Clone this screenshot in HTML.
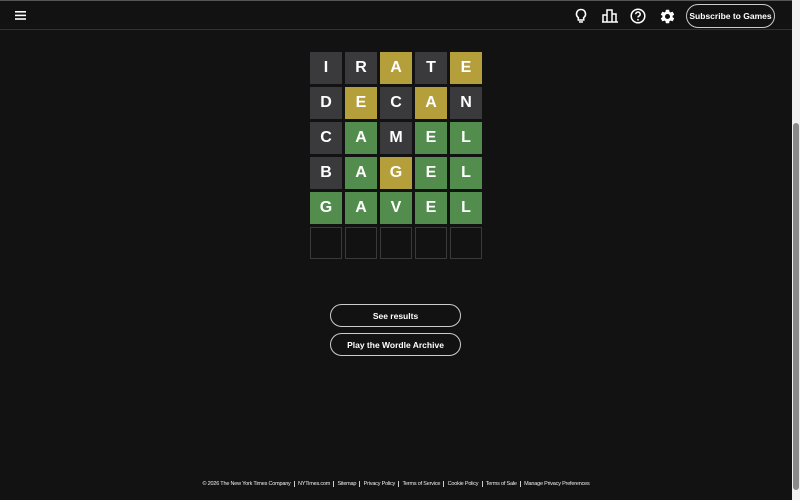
<!DOCTYPE html>
<html><head><meta charset="utf-8"><style>
*{margin:0;padding:0;box-sizing:border-box}
html,body{width:800px;height:500px;overflow:hidden;background:#121213;font-family:"Liberation Sans",Arial,sans-serif;color:#fff}
#main{position:absolute;left:0;top:0;width:792px;height:500px;background:#121213}
#hdr{position:absolute;left:0;top:0;width:792px;height:30px;border-top:1px solid #555;border-bottom:1px solid #333;background:#121213}
.sb{position:absolute;left:792px;top:0;width:8px;height:500px;background:#f1f1f1}
.thumb{position:absolute;left:793px;top:123px;width:6px;height:367px;background:#8a8a8a;border-radius:3px}
.tile{position:absolute;width:32px;height:32px;display:flex;align-items:center;justify-content:center;font-weight:bold;font-size:16px}
.x{background:#3a3a3c}.y{background:#b59f3b}.g{background:#538d4e}.e{border:1px solid #3a3a3c}
.btn{position:absolute;left:330px;width:131px;height:23px;border:1px solid #ccc;border-radius:12px;font-size:8.5px;font-weight:bold;display:flex;align-items:center;justify-content:center}
#sub{position:absolute;left:686px;top:3px;width:89px;height:24px;border:1px solid #ccc;border-radius:12px;font-size:8.5px;font-weight:bold;display:flex;align-items:center;justify-content:center}
#ft{position:absolute;top:481px;left:0;width:792px;text-align:center;font-size:5.5px;letter-spacing:-0.2px;color:#eee}
#ft span{padding:0 3.2px;border-left:1px solid #ccc}
#ft span:first-child{border:none}
</style></head><body>
<div id="main">
<div id="hdr">
<svg style="position:absolute;left:15px;top:10px" width="11" height="9"><rect y="0" width="11" height="1.6" fill="#fff"/><rect y="3.6" width="11" height="1.6" fill="#fff"/><rect y="7.2" width="11" height="1.6" fill="#fff"/></svg>
<svg style="position:absolute;left:574px;top:7px" width="14" height="16" viewBox="0 0 14 16"><path d="M7 1.5a4.5 4.5 0 0 0-2.7 8.1V12h5.4V9.6A4.5 4.5 0 0 0 7 1.5z" fill="none" stroke="#fff" stroke-width="1.6"/><rect x="5" y="13.2" width="4" height="1.5" fill="#fff"/></svg>
<svg style="position:absolute;left:602px;top:8px" width="16" height="14" viewBox="0 0 16 14"><path d="M1 13V6h4v7M5 13V1h5v12M10 13V5h4v8M0 13h16" fill="none" stroke="#fff" stroke-width="1.5"/></svg>
<svg style="position:absolute;left:630px;top:7px" width="16" height="16" viewBox="0 0 16 16"><circle cx="8" cy="8" r="6.8" fill="none" stroke="#fff" stroke-width="1.5"/><path d="M5.8 6.2a2.2 2.2 0 1 1 3 2c-.6.3-.8.7-.8 1.3" fill="none" stroke="#fff" stroke-width="1.5"/><circle cx="8" cy="11.8" r=".9" fill="#fff"/></svg>
<svg style="position:absolute;left:659px;top:7px" width="17" height="17" viewBox="0 0 24 24"><path fill="#fff" d="M19.14 12.94c.04-.3.06-.61.06-.94 0-.32-.02-.64-.07-.94l2.030-1.58a.49.49 0 0 0 .12-.61l-1.92-3.32a.49.49 0 0 0-.59-.22l-2.39.96c-.5-.38-1.030-.7-1.62-.94l-.36-2.54a.48.48 0 0 0-.48-.41h-3.84c-.24 0-.43.17-.47.41l-.36 2.54c-.59.24-1.130.57-1.62.94l-2.39-.96a.49.49 0 0 0-.59.22L2.74 8.87c-.12.21-.08.47.12.61l2.030 1.58c-.05.3-.09.63-.09.94s.02.64.07.94l-2.030 1.58a.49.49 0 0 0-.12.61l1.92 3.32c.12.22.37.29.59.22l2.39-.96c.5.38 1.030.7 1.62.94l.36 2.54c.05.24.24.41.48.41h3.84c.24 0 .44-.17.47-.41l.36-2.54c.59-.24 1.130-.56 1.62-.94l2.39.96c.22.08.47 0 .59-.22l1.92-3.32c.12-.22.07-.47-.12-.61l-2.010-1.58zM12 15.6A3.6 3.6 0 1 1 12 8.4a3.6 3.6 0 0 1 0 7.2z"/></svg>
<div id="sub">Subscribe to Games</div>
</div>
<div class="tile x" style="left:310px;top:52px">I</div><div class="tile x" style="left:345px;top:52px">R</div><div class="tile y" style="left:380px;top:52px">A</div><div class="tile x" style="left:415px;top:52px">T</div><div class="tile y" style="left:450px;top:52px">E</div>
<div class="tile x" style="left:310px;top:87px">D</div><div class="tile y" style="left:345px;top:87px">E</div><div class="tile x" style="left:380px;top:87px">C</div><div class="tile y" style="left:415px;top:87px">A</div><div class="tile x" style="left:450px;top:87px">N</div>
<div class="tile x" style="left:310px;top:122px">C</div><div class="tile g" style="left:345px;top:122px">A</div><div class="tile x" style="left:380px;top:122px">M</div><div class="tile g" style="left:415px;top:122px">E</div><div class="tile g" style="left:450px;top:122px">L</div>
<div class="tile x" style="left:310px;top:157px">B</div><div class="tile g" style="left:345px;top:157px">A</div><div class="tile y" style="left:380px;top:157px">G</div><div class="tile g" style="left:415px;top:157px">E</div><div class="tile g" style="left:450px;top:157px">L</div>
<div class="tile g" style="left:310px;top:192px">G</div><div class="tile g" style="left:345px;top:192px">A</div><div class="tile g" style="left:380px;top:192px">V</div><div class="tile g" style="left:415px;top:192px">E</div><div class="tile g" style="left:450px;top:192px">L</div>
<div class="tile e" style="left:310px;top:227px"></div><div class="tile e" style="left:345px;top:227px"></div><div class="tile e" style="left:380px;top:227px"></div><div class="tile e" style="left:415px;top:227px"></div><div class="tile e" style="left:450px;top:227px"></div>
<div class="btn" style="top:304px">See results</div>
<div class="btn" style="top:333px">Play the Wordle Archive</div>
<div id="ft"><span>© 2026 The New York Times Company</span><span>NYTimes.com</span><span>Sitemap</span><span>Privacy Policy</span><span>Terms of Service</span><span>Cookie Policy</span><span>Terms of Sale</span><span>Manage Privacy Preferences</span></div>
</div>
<div class="sb"></div><div class="thumb"></div>
</body></html>
